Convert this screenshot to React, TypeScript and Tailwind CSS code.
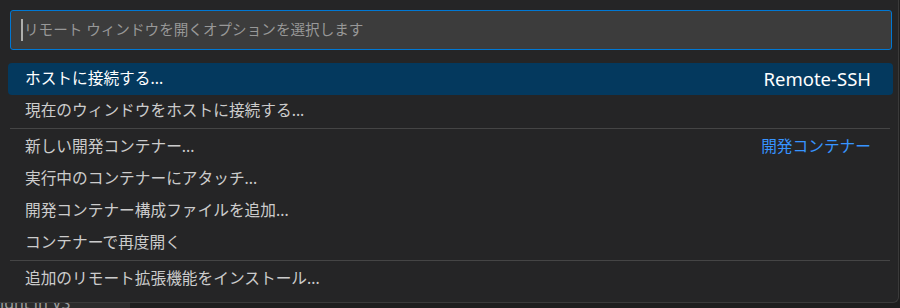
const font = {
  fontFamily: '"Noto Sans", "Noto Sans CJK JP", sans-serif',
};

type Item = { label: string; detail?: string; detailClass?: string };

const groups: Item[][] = [
  [
    { label: "ホストに接続する...", detail: "Remote-SSH", detailClass: "text-[18.5px] text-white" },
    { label: "現在のウィンドウをホストに接続する..." },
  ],
  [
    { label: "新しい開発コンテナー...", detail: "開発コンテナー", detailClass: "text-[#3794ff]" },
    { label: "実行中のコンテナーにアタッチ..." },
    { label: "開発コンテナー構成ファイルを追加..." },
    { label: "コンテナーで再度開く" },
  ],
  [{ label: "追加のリモート拡張機能をインストール..." }],
];

function Row({ item, active }: { item: Item; active: boolean }) {
  return (
    <div
      className={`flex h-[32px] items-center justify-between rounded-[4px] pl-[17px] pr-[22px] text-[15.7px] ${
        active ? "bg-[#04395e] text-white" : "text-[#cccccc]"
      }`}
    >
      <span>{item.label}</span>
      {item.detail && <span className={item.detailClass}>{item.detail}</span>}
    </div>
  );
}

export default function App() {
  return (
    <div className="h-[308px] w-[900px] overflow-hidden bg-[#1e1e1e]" style={font}>
      <div className="h-[303px] w-[899px] rounded-br-[6px] border-b border-r border-[#3a3a3a] bg-[#252526]">
        <div className="px-[10px] pt-[10px]">
          <div className="flex h-[40px] w-[882px] items-center rounded-[3px] border border-[#0078d4] bg-[#3c3c3c] pl-[10px]">
            <span className="mr-[1px] h-[22px] w-[2px] bg-[#aeafad]" />
            <span className="text-[14.6px] text-[#989898]">
              リモート ウィンドウを開くオプションを選択します
            </span>
          </div>
        </div>
        <div className="mt-[13px] w-[893px] pl-[8px]">
          {groups.map((group, gi) => (
            <div key={gi}>
              {gi > 0 && (
                <div className="flex h-[4px] flex-col pt-[1px] pl-[2px]">
                  <div className="h-[1px] w-[880px] bg-[#454545]" />
                </div>
              )}
              {group.map((item, ii) => (
                <Row key={ii} item={item} active={gi === 0 && ii === 0} />
              ))}
            </div>
          ))}
        </div>
      </div>
      <div className="h-[5px] overflow-hidden">
        <div className="h-[5px] w-[130px] overflow-hidden bg-[#2b2b2b]">
          <div className="-mt-[10px] text-[16px] leading-[20px] text-[#9d9d9d]">ight in VS</div>
        </div>
      </div>
    </div>
  );
}
